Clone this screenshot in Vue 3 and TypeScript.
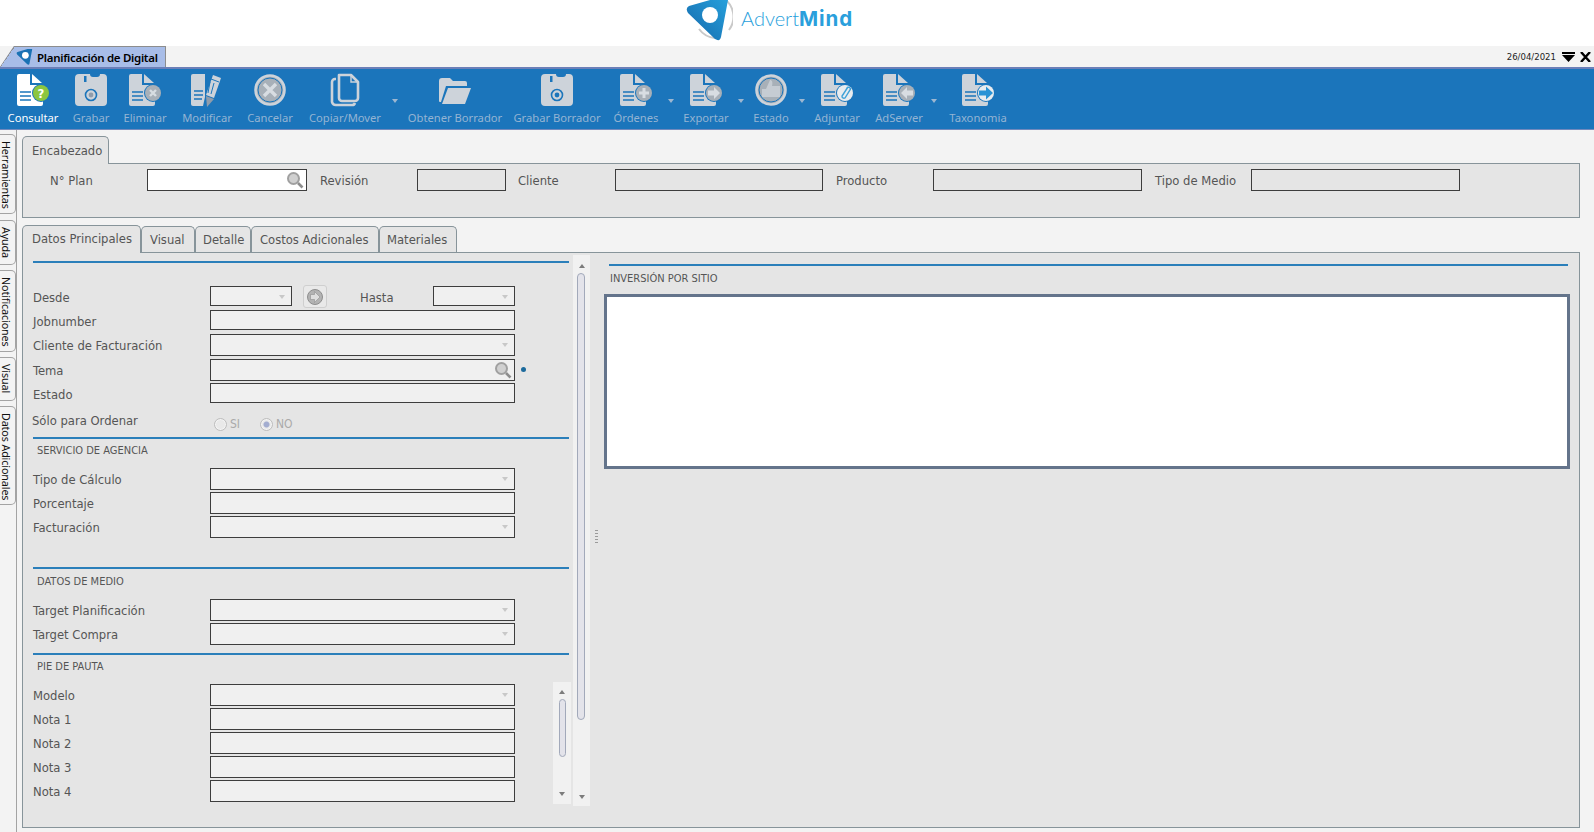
<script setup lang="ts">
type IconKind = 'doc' | 'floppy' | 'edit' | 'cancel' | 'copy' | 'folder' | 'thumb'
type Badge = 'help' | 'x' | 'plus' | 'right' | 'clip' | 'left' | 'go'

interface ToolItem {
  label: string
  icon: IconKind
  badge?: Badge
  width: number
  active?: boolean
  menu?: boolean
  gap?: number
}

interface Field {
  label: string
  kind: 'input' | 'select'
}

interface Section {
  title: string
  cls: string
  rows: Field[]
}

const tools: ToolItem[] = [
  { label: 'Consultar', icon: 'doc', badge: 'help', width: 58, active: true, gap: 4 },
  { label: 'Grabar', icon: 'floppy', width: 58 },
  { label: 'Eliminar', icon: 'doc', badge: 'x', width: 50 },
  { label: 'Modificar', icon: 'edit', width: 74 },
  { label: 'Cancelar', icon: 'cancel', width: 52 },
  { label: 'Copiar/Mover', icon: 'copy', width: 90, menu: true, gap: 4 },
  { label: 'Obtener Borrador', icon: 'folder', width: 110 },
  { label: 'Grabar Borrador', icon: 'floppy', width: 90, gap: 2 },
  { label: 'Órdenes', icon: 'doc', badge: 'plus', width: 60, menu: true, gap: 4 },
  { label: 'Exportar', icon: 'doc', badge: 'right', width: 60, menu: true, gap: 0 },
  { label: 'Estado', icon: 'thumb', width: 52, menu: true, gap: -1 },
  { label: 'Adjuntar', icon: 'doc', badge: 'clip', width: 60, gap: 0 },
  { label: 'AdServer', icon: 'doc', badge: 'left', width: 60, menu: true, gap: 2 },
  { label: 'Taxonomia', icon: 'doc', badge: 'go', width: 76, gap: 1 },
]

const railTabs = [
  { label: 'Herramientas', cls: 'r1' },
  { label: 'Ayuda', cls: 'r2' },
  { label: 'Notificaciones', cls: 'r3' },
  { label: 'Visual', cls: 'r4' },
  { label: 'Datos Adicionales', cls: 'r5' },
]

const tabs = ['Datos Principales', 'Visual', 'Detalle', 'Costos Adicionales', 'Materiales']

const headerFields = [
  { label: 'N° Plan', cls: 'h-plan', search: true },
  { label: 'Revisión', cls: 'h-rev' },
  { label: 'Cliente', cls: 'h-cli' },
  { label: 'Producto', cls: 'h-prod' },
  { label: 'Tipo de Medio', cls: 'h-tipo' },
]

const sections: Section[] = [
  {
    title: 'SERVICIO DE AGENCIA',
    cls: 'sec-agencia',
    rows: [
      { label: 'Tipo de Cálculo', kind: 'select' },
      { label: 'Porcentaje', kind: 'input' },
      { label: 'Facturación', kind: 'select' },
    ],
  },
  {
    title: 'DATOS DE MEDIO',
    cls: 'sec-medio',
    rows: [
      { label: 'Target Planificación', kind: 'select' },
      { label: 'Target Compra', kind: 'select' },
    ],
  },
]

const pieRows: Field[] = [
  { label: 'Modelo', kind: 'select' },
  { label: 'Nota 1', kind: 'input' },
  { label: 'Nota 2', kind: 'input' },
  { label: 'Nota 3', kind: 'input' },
  { label: 'Nota 4', kind: 'input' },
]
</script>

<template>
  <div class="page">
    <header class="brand">
      <svg class="brand-mark" width="48" height="42" viewBox="0 0 48 42">
        <defs>
          <linearGradient id="markGrad" x1="0" y1="1" x2="1" y2="0">
            <stop offset="0" stop-color="#1568ab" />
            <stop offset="1" stop-color="#27a3de" />
          </linearGradient>
        </defs>
        <path d="M38 -2 A22 22 0 0 1 44 30" fill="none" stroke="#c9c9c9" stroke-width="2" />
        <path d="M14 29 A22 22 0 0 0 30 38" fill="none" stroke="#c9c9c9" stroke-width="2" />
        <path d="M4 6 L39 -4 Q44 -5 43 0 L36 37 Q35 42 30 39 L3 13 Q0 8 4 6 Z" fill="url(#markGrad)" />
        <circle cx="25" cy="15" r="8" fill="#fff" />
      </svg>
      <span class="brand-name">Advert<b>Mind</b></span>
    </header>

    <div class="windowbar">
      <div class="doc-tab">
        <svg width="18" height="17" viewBox="0 0 48 42">
          <path d="M4 6 L39 -4 Q44 -5 43 0 L36 37 Q35 42 30 39 L3 13 Q0 8 4 6 Z" fill="#1a72b4" />
          <circle cx="25" cy="15" r="9" fill="#fff" />
        </svg>
        <span>Planificación de Digital</span>
      </div>
      <div class="window-tools">
        <span class="date">26/04/2021</span>
        <svg width="13" height="10" viewBox="0 0 13 10">
          <path d="M0 0H13V2H0Z M0 3H13L6.5 10Z" fill="#000" />
        </svg>
        <svg width="11" height="10" viewBox="0 0 11 10">
          <path d="M1 0L10 10M10 0L1 10" stroke="#000" stroke-width="2.4" fill="none" />
        </svg>
      </div>
    </div>

    <nav class="toolbar">
      <template v-for="tool in tools" :key="tool.label">
        <div
          class="tool"
          :class="{ active: tool.active }"
          :style="{ width: tool.width + 'px', marginLeft: (tool.gap ?? 0) + 'px' }"
        >
          <svg class="tool-icon" width="34" height="34" viewBox="0 0 34 34">
            <!-- document with round badge -->
            <g v-if="tool.icon === 'doc'" :fill="tool.active ? '#fff' : '#cdd3da'">
              <path d="M3 1H14V12H27V31a2 2 0 0 1-2 2H3a2 2 0 0 1-2-2V3a2 2 0 0 1 2-2Z" />
              <path d="M16 1L26 10H16Z" />
              <path d="M4 19H15M4 23H15M4 27H15" stroke="#1b75bb" stroke-width="1.6" fill="none" />
              <circle cx="25" cy="20" r="9" fill="#1b75bb" />
              <template v-if="tool.badge === 'help'">
                <circle cx="25" cy="20" r="8" fill="#8cc63f" />
                <text x="25" y="25" text-anchor="middle" class="help-mark">?</text>
              </template>
              <template v-else-if="tool.badge === 'clip' || tool.badge === 'go'">
                <circle cx="25" cy="20" r="8" fill="#e8ecef" />
                <path
                  v-if="tool.badge === 'clip'"
                  d="M28 14L22 23a2 2 0 0 0 3 2L30 17a1.5 1.5 0 0 0-3-2L23 22"
                  fill="none"
                  stroke="#3fa2d8"
                  stroke-width="1.4"
                />
                <path v-else d="M18 17.5H25V13.5L32 20L25 26.5V22.5H18Z" fill="#2a93d5" />
              </template>
              <template v-else>
                <circle cx="25" cy="20" r="8" fill="#a8b0b8" />
                <path v-if="tool.badge === 'x'" d="M22 17L28 23M28 17L22 23" stroke="#d8dde2" stroke-width="2.4" />
                <path v-if="tool.badge === 'plus'" d="M25 15V25M20 20H30" stroke="#d8dde2" stroke-width="3" />
                <path v-if="tool.badge === 'right'" d="M19 17.5H25V14L31 20L25 26V22.5H19Z" fill="#d8dde2" />
                <path v-if="tool.badge === 'left'" d="M31 17.5H25V14L19 20L25 26V22.5H31Z" fill="#d8dde2" />
              </template>
            </g>

            <g v-else-if="tool.icon === 'floppy'" fill="#cdd3da">
              <path d="M5 1H16C16 3 17 4 19 4H23C25 4 26 3 26 1H29a4 4 0 0 1 4 4V29a4 4 0 0 1-4 4H5a4 4 0 0 1-4-4V5a4 4 0 0 1 4-4Z" />
              <path d="M10 3H12.5V9H10Z" fill="#1b75bb" />
              <circle cx="17" cy="22" r="5.5" fill="none" stroke="#1b75bb" stroke-width="1.6" />
              <circle cx="17" cy="22" r="2.4" :fill="tool.label === 'Grabar' ? '#8f9cab' : '#1b75bb'" />
            </g>

            <g v-else-if="tool.icon === 'edit'" fill="#cdd3da">
              <path d="M3 1H15V24L13 33H3a2 2 0 0 1-2-2V3a2 2 0 0 1 2-2Z" />
              <path d="M4 18H13M4 22H13M4 26H12" stroke="#1b75bb" stroke-width="1.6" fill="none" />
              <path d="M23 2L31 5L24 25L16 22Z" />
              <path d="M16 23L24 26L17 34Z" fill="#8f9cab" />
              <path d="M21 6L29 9M20 9L18 20M24 10L21 21" stroke="#1b75bb" stroke-width="1" fill="none" />
            </g>

            <g v-else-if="tool.icon === 'cancel'">
              <circle cx="17" cy="17" r="14.5" fill="#a8b0b8" stroke="#cdd3da" stroke-width="2.6" />
              <circle cx="17" cy="17" r="12" fill="none" stroke="#1b75bb" stroke-width="1" />
              <path d="M11 11L23 23M23 11L11 23" stroke="#d8dde2" stroke-width="3.4" />
            </g>

            <g v-else-if="tool.icon === 'thumb'">
              <circle cx="17" cy="17" r="14.5" fill="#a8b0b8" stroke="#cdd3da" stroke-width="2.6" />
              <circle cx="17" cy="17" r="12" fill="none" stroke="#1b75bb" stroke-width="1" />
              <path d="M8 16H12L16 7C18 7 19 9 18 13H26V24H12L8 24Z" fill="#c6ccd3" />
            </g>

            <g v-else-if="tool.icon === 'copy'" fill="none" stroke="#cdd3da" stroke-width="2.6">
              <path d="M11 2H23L30 9V25a3 3 0 0 1-3 3H14a3 3 0 0 1-3-3V2Z" stroke-linejoin="round" />
              <path d="M23 2V9H30" stroke-width="1.4" />
              <path d="M8 6H7a3 3 0 0 0-3 3V29a4 4 0 0 0 4 3H24a3 3 0 0 0 3-2" />
            </g>

            <g v-else fill="#cdd3da">
              <path d="M1 8a3 3 0 0 1 3-3H12L15 8H27a2 2 0 0 1 2 2V13H8L3 29H2a1 1 0 0 1-1-1Z" />
              <path d="M10 15H33L27 31H4Z" />
            </g>
          </svg>
          <span class="tool-label">{{ tool.label }}</span>
        </div>
        <span v-if="tool.menu" class="tool-menu"></span>
      </template>
    </nav>

    <main class="workspace">
      <aside class="rail">
        <div v-for="tab in railTabs" :key="tab.label" class="rail-tab" :class="tab.cls">
          <span>{{ tab.label }}</span>
        </div>
      </aside>

      <div class="content">
        <div class="tab-strip">
          <div class="tab current head-tab">Encabezado</div>
        </div>
        <section class="head-panel">
          <div v-for="f in headerFields" :key="f.label" class="head-field" :class="f.cls">
            <label>{{ f.label }}</label>
            <div class="box">
              <svg v-if="f.search" class="lens" width="18" height="18" viewBox="0 0 18 18">
                <circle cx="7.5" cy="7.5" r="5.5" fill="#d0d0d0" stroke="#a0a0a0" stroke-width="2" />
                <path d="M12 12L16.5 16.5" stroke="#8d8d8d" stroke-width="2.6" />
              </svg>
            </div>
          </div>
        </section>

        <div class="tab-strip main-strip">
          <div v-for="(tab, i) in tabs" :key="tab" class="tab" :class="[`t${i}`, { current: i === 0 }]">{{ tab }}</div>
        </div>

        <section class="main-panel">
          <div class="form-col">
            <div class="sec sec-main">
              <div class="grid">
                <label>Desde</label>
                <div class="inline-row">
                  <div class="box dis sm date-box"><i class="caret"></i></div>
                  <button class="go-btn" type="button">
                    <svg width="18" height="18" viewBox="0 0 18 18">
                      <circle cx="9" cy="9" r="7.5" fill="#b3b3b3" stroke="#8e8e8e" />
                      <path d="M4.5 6.5H8.5V3.5L14 9L8.5 14.5V11.5H4.5Z" fill="#dedede" stroke="#8e8e8e" stroke-width=".6" />
                    </svg>
                  </button>
                  <label class="hasta">Hasta</label>
                  <div class="box dis sm date-box"><i class="caret"></i></div>
                </div>

                <label>Jobnumber</label>
                <div class="box dis sm"></div>

                <label>Cliente de Facturación</label>
                <div class="box dis"><i class="caret"></i></div>

                <label>Tema</label>
                <div class="tema">
                  <div class="box dis">
                    <svg class="lens" width="18" height="18" viewBox="0 0 18 18">
                      <circle cx="7.5" cy="7.5" r="5.5" fill="#d0d0d0" stroke="#a0a0a0" stroke-width="2" />
                      <path d="M12 12L16.5 16.5" stroke="#8d8d8d" stroke-width="2.6" />
                    </svg>
                  </div>
                  <i class="req-dot"></i>
                </div>

                <label>Estado</label>
                <div class="box dis sm"></div>

                <label class="only">Sólo para Ordenar</label>
                <div class="radios">
                  <span class="radio"><i></i>SI</span>
                  <span class="radio on"><i></i>NO</span>
                </div>
              </div>
            </div>

            <div v-for="sec in sections" :key="sec.title" class="sec" :class="sec.cls">
              <h3>{{ sec.title }}</h3>
              <div class="grid plain">
                <template v-for="row in sec.rows" :key="row.label">
                  <label>{{ row.label }}</label>
                  <div class="box dis">
                    <i v-if="row.kind === 'select'" class="caret"></i>
                  </div>
                </template>
              </div>
            </div>

            <div class="sec sec-pie">
              <h3>PIE DE PAUTA</h3>
              <div class="pie-body">
                <div class="grid plain">
                  <template v-for="row in pieRows" :key="row.label">
                    <label>{{ row.label }}</label>
                    <div class="box dis">
                      <i v-if="row.kind === 'select'" class="caret"></i>
                    </div>
                  </template>
                </div>
                <div class="scroll inner">
                  <i class="up"></i>
                  <b class="thumb"></b>
                  <i class="down"></i>
                </div>
              </div>
            </div>
          </div>

          <div class="scroll outer">
            <i class="up"></i>
            <b class="thumb"></b>
            <i class="down"></i>
          </div>

          <div class="split"></div>

          <div class="right-col">
            <div class="right-title">INVERSIÓN POR SITIO</div>
            <div class="chart-box"></div>
          </div>
        </section>
      </div>
    </main>
  </div>
</template>

<style>
html,
body {
  margin: 0;
  background: #f3f3f3;
}
</style>

<style scoped>
.page {
  width: 1594px;
  height: 832px;
  overflow: hidden;
  background: #f3f3f3;
  font-family: "DejaVu Sans Condensed", "DejaVu Sans", sans-serif;
  font-stretch: condensed;
  color: #555;
  font-size: 12px;
}

/* brand */
.brand {
  height: 46px;
  background: #fff;
  display: flex;
  align-items: flex-start;
  overflow: hidden;
  padding-left: 685px;
  box-sizing: border-box;
}

.brand-name {
  font-family: Lato, sans-serif;
  font-stretch: normal;
  font-size: 20px;
  font-weight: 300;
  color: #2a9fdc;
  margin: 6px 0 0 8px;
}

.brand-name b {
  font-family: Inter, sans-serif;
  font-weight: 700;
  font-size: 20.5px;
  letter-spacing: 0.9px;
}

/* window bar */
.windowbar {
  height: 21px;
  display: flex;
  justify-content: space-between;
  align-items: flex-end;
}

.doc-tab {
  width: 166px;
  height: 21px;
  box-sizing: border-box;
  background:
    linear-gradient(to bottom right, transparent calc(50% - 1px), #8d8d8d calc(50% - 1px), #8d8d8d calc(50% + 0.5px), #a8bde8 calc(50% + 0.5px)) left top / 14px 100% no-repeat,
    #a8bde8;
  border-top: 1px solid #8d8d8d;
  border-right: 1px solid #8d8d8d;
  clip-path: polygon(14px 0, 100% 0, 100% 100%, 0 100%);
  display: flex;
  align-items: center;
  padding-left: 16px;
  gap: 3px;
  color: #000;
  font-family: "Noto Sans", sans-serif;
  font-stretch: normal;
  font-size: 11.5px;
  font-weight: 600;
  letter-spacing: -0.3px;
}

.window-tools {
  display: flex;
  align-items: center;
  gap: 5px;
  height: 21px;
  padding-right: 3px;
}

.date {
  font-size: 9.5px;
  color: #222;
  margin-right: 1px;
}

/* toolbar */
.toolbar {
  height: 63px;
  box-sizing: border-box;
  background: #1b75bb;
  border-top: 2px solid #6b7fb8;
  border-bottom: 1px solid #7189bd;
  display: flex;
  align-items: flex-start;
  padding-top: 4px;
}

.tool {
  flex: none;
  display: flex;
  flex-direction: column;
  align-items: center;
}

.tool-icon {
  display: block;
}

.tool-label {
  margin-top: 4px;
  font-family: "Noto Sans", sans-serif;
  font-stretch: normal;
  font-size: 11.2px;
  line-height: 14px;
  white-space: nowrap;
  color: #94b4d3;
}

.tool.active .tool-label {
  color: #fff;
}

.help-mark {
  font-family: "DejaVu Sans", sans-serif;
  font-size: 13px;
  font-weight: 700;
  fill: #fff;
}

.tool-menu {
  flex: none;
  width: 10px;
  height: 62px;
  margin-top: -4px;
  position: relative;
}

.tool-menu::after {
  content: "";
  position: absolute;
  left: 2px;
  top: 30px;
  border: 3px solid transparent;
  border-top: 4px solid #9db7d1;
  border-bottom: 0;
}

/* workspace */
.workspace {
  display: flex;
  height: 702px;
}

.rail {
  width: 17px;
  flex: none;
  box-sizing: border-box;
  border-right: 1px solid #a3a3a3;
  padding-top: 4px;
}

.rail-tab {
  width: 16px;
  box-sizing: border-box;
  border: 1px solid #a3a3a3;
  border-left: 0;
  border-radius: 0 5px 5px 0;
  background: #f3f3f3;
  writing-mode: vertical-rl;
  display: flex;
  align-items: center;
  font-family: "Noto Sans", sans-serif;
  font-stretch: normal;
  font-size: 10.7px;
  letter-spacing: -0.1px;
  color: #111;
  padding: 6px 3px 0 0;
}

.r1 {
  height: 80px;
}

.r2 {
  height: 45px;
  margin-top: 6px;
}

.r3 {
  height: 82px;
  margin-top: 5px;
}

.r4 {
  height: 44px;
  margin-top: 5px;
}

.r5 {
  height: 99px;
  margin-top: 5px;
}

.content {
  margin-left: 5px;
  width: 1558px;
  padding-top: 5px;
  flex: none;
}

.tab-strip {
  display: flex;
  align-items: flex-end;
  height: 28px;
}

.tab {
  box-sizing: border-box;
  height: 26px;
  background: #e5e5e5;
  border: 1px solid #87949a;
  border-bottom: 0;
  border-radius: 5px 5px 0 0;
  padding-left: 8px;
  line-height: 25px;
  font-size: 12.9px;
  color: #555;
  white-space: nowrap;
}

.tab.current {
  height: 28px;
  position: relative;
  z-index: 1;
  margin-bottom: -1px;
  line-height: 26px;
  padding-left: 9px;
}

.head-tab {
  width: 87px;
  line-height: 28px !important;
}

.t0 {
  width: 119px;
}

.t1 {
  width: 54px;
}

.t2 {
  width: 56px;
  padding-left: 7px;
}

.t3 {
  width: 128px;
}

.t4 {
  width: 78px;
  padding-left: 7px;
}

.head-panel {
  height: 55px;
  box-sizing: border-box;
  background: #e5e5e5;
  border: 1px solid #87949a;
  display: flex;
  align-items: flex-start;
  padding: 5px 0 0 27px;
}

.head-field {
  display: flex;
  align-items: center;
  margin-right: 13px;
}

.head-field label {
  width: 97px;
  flex: none;
  font-size: 12.9px;
}

.h-plan .box {
  width: 160px;
  background: #fff;
}

.h-rev .box {
  width: 89px;
}

.h-cli {
  margin-left: -1px;
}

.h-cli .box {
  width: 208px;
}

.h-prod .box {
  width: 209px;
}

.h-tipo label {
  width: 96px;
}

.h-tipo .box {
  width: 209px;
}

.main-strip {
  margin-top: 6px;
}

.box {
  box-sizing: border-box;
  height: 22px;
  border: 1px solid #3d3d3d;
  position: relative;
  flex: none;
}

.box.dis {
  background: #f0f0f0;
  width: 305px;
}

.box.sm {
  height: 20px;
}

.lens {
  position: absolute;
  right: 2px;
  top: 1px;
}

.caret {
  position: absolute;
  right: 6px;
  top: 8px;
  border: 3.5px solid transparent;
  border-top: 4px solid #c8c8c8;
  border-bottom: 0;
}

.main-panel {
  height: 576px;
  box-sizing: border-box;
  background: #e5e5e5;
  border: 1px solid #87949a;
  display: flex;
  align-items: flex-start;
}

.form-col {
  width: 536px;
  flex: none;
  margin: 8px 4px 0 10px;
}

.sec {
  border-top: 2px solid #2b7fba;
  box-sizing: border-box;
}

.sec h3 {
  margin: 0;
  height: 29px;
  padding: 5px 0 0 4px;
  box-sizing: border-box;
  font-size: 11px;
  line-height: 14px;
  font-weight: 400;
  color: #555;
}

.sec-main {
  height: 176px;
  padding-top: 23px;
}

.sec-agencia {
  height: 130px;
}

.sec-medio {
  height: 86px;
}

.sec-medio h3 {
  height: 30px;
  padding-top: 6px;
}

.grid {
  display: grid;
  grid-template-columns: 177px 305px;
  grid-template-rows: 24px 24px 25px 24px 24px 30px;
  align-items: start;
}

.grid.plain {
  grid-template-rows: none;
  grid-auto-rows: 24px;
}

.grid label {
  font-size: 12.9px;
  line-height: 22px;
  margin-top: 1px;
}

.grid label.only {
  margin-top: 3px;
  margin-left: -1px;
}

.inline-row {
  display: flex;
  align-items: flex-start;
}

.date-box.box.dis {
  width: 82px;
}

.go-btn {
  width: 24px;
  height: 23px;
  margin: -1px 0 0 11px;
  padding: 0;
  border: 1px solid #cfcfcf;
  border-radius: 3px;
  background: #e9e9e9;
  display: flex;
  align-items: center;
  justify-content: center;
}

.hasta {
  width: 73px;
  margin-left: 33px;
  flex: none;
}

.tema {
  position: relative;
}

.req-dot {
  position: absolute;
  left: 311px;
  top: 8px;
  width: 5px;
  height: 5px;
  border-radius: 50%;
  background: #1c6a9c;
}

.radios {
  display: flex;
  padding: 10px 0 0 4px;
}

.radio {
  width: 46px;
  display: flex;
  align-items: center;
  gap: 3px;
  font-size: 12px;
  color: #aaa;
}

.radio i {
  width: 13px;
  height: 13px;
  box-sizing: border-box;
  border-radius: 50%;
  border: 1px solid #bdbdbd;
  background: #e9e9e9;
  box-shadow: inset 0 0 0 1px #f4f4f4;
}

.radio.on i {
  background: radial-gradient(circle, #a3add0 0 2.5px, #e9e9e9 3.5px);
}

.pie-body {
  display: flex;
  align-items: flex-start;
}

.scroll {
  background: #f1f1f1;
  position: relative;
  flex: none;
}

.scroll .up,
.scroll .down {
  position: absolute;
  left: 50%;
  margin-left: -3px;
  border: 3px solid transparent;
}

.scroll .up {
  border-top: 0;
  border-bottom: 4px solid #7c7c7c;
}

.scroll .down {
  border-bottom: 0;
  border-top: 4px solid #7c7c7c;
}

.scroll .thumb {
  position: absolute;
  box-sizing: border-box;
  border: 1px solid #a2a9ba;
  border-radius: 4px;
  background: #e3e3ea;
}

.scroll.inner {
  width: 18px;
  height: 122px;
  margin: -2px 0 0 38px;
}

.inner .up {
  top: 8px;
}

.inner .down {
  bottom: 8px;
}

.inner .thumb {
  left: 6px;
  width: 7px;
  top: 17px;
  height: 58px;
}

.scroll.outer {
  width: 17px;
  height: 551px;
  margin-top: 2px;
}

.outer .up {
  top: 9px;
}

.outer .down {
  bottom: 7px;
}

.outer .thumb {
  left: 4px;
  width: 8px;
  top: 18px;
  height: 447px;
}

.split {
  width: 14px;
  height: 14px;
  flex: none;
  margin-top: 277px;
  background: repeating-linear-gradient(#9a9a9a 0 1px, transparent 1px 3px) 5px 0 / 3px 100% no-repeat;
}

.right-col {
  flex: none;
  width: 966px;
  margin-top: 11px;
}

.right-title {
  margin-left: 5px;
  margin-right: 2px;
  border-top: 2px solid #2b7fba;
  padding: 6px 0 0 1px;
  height: 19px;
  line-height: 14px;
  font-size: 11px;
  color: #555;
}

.chart-box {
  margin-top: 3px;
  height: 175px;
  box-sizing: border-box;
  background: #fff;
  border: 3px solid #64748b;
}
</style>
